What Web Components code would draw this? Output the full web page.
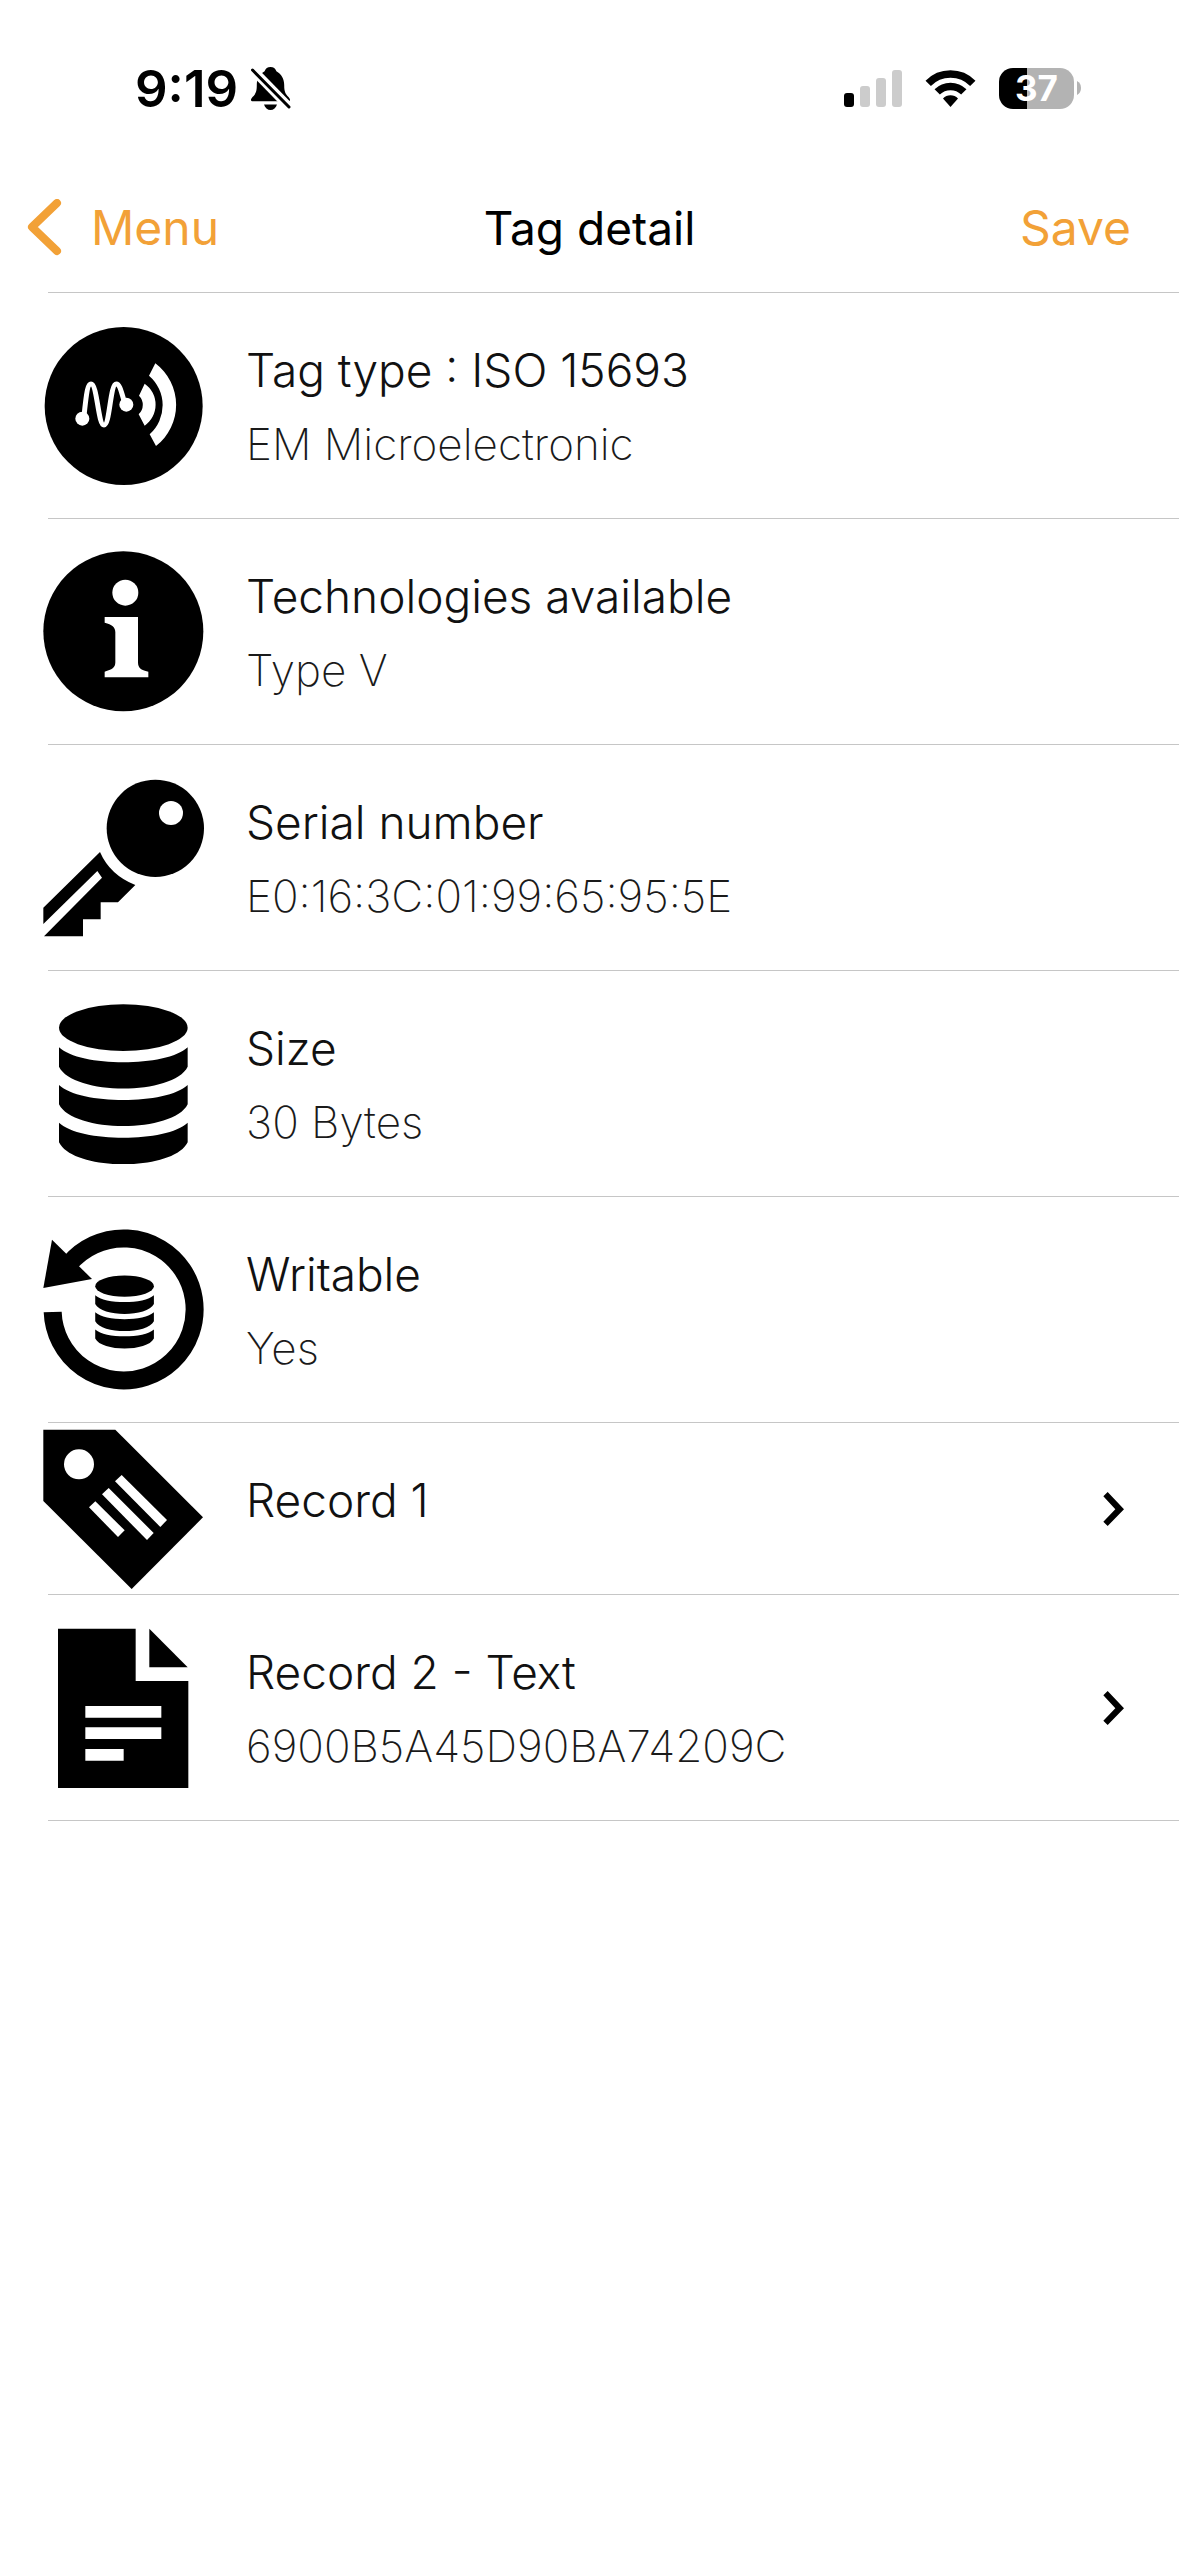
<!DOCTYPE html>
<html lang="en">
<head>
<meta charset="utf-8">
<meta name="viewport" content="width=device-width, initial-scale=1">
<title>Tag detail</title>
<style>
    :root {
        --accent: #f2a137;
        --line: #c6c6c6;
        --inset: 48px;
    }
    body {
        margin: 0;
        background: #fff;
        color: #000;
        font-family: Inter, "Liberation Sans", sans-serif;
    }
</style>
</head>
<body>
<status-bar time="9:19" battery="37"></status-bar>
<nav-bar>
    <a slot="back" href="#menu">Menu</a>
    Tag detail
    <button slot="action" type="button">Save</button>
</nav-bar>
<main>
    <tag-row icon="nfc">Tag type : ISO 15693<span slot="detail">EM Microelectronic</span></tag-row>
    <tag-row icon="info">Technologies available<span slot="detail">Type V</span></tag-row>
    <tag-row icon="key">Serial number<span slot="detail">E0:16:3C:01:99:65:95:5E</span></tag-row>
    <tag-row icon="size">Size<span slot="detail">30 Bytes</span></tag-row>
    <tag-row icon="writable">Writable<span slot="detail">Yes</span></tag-row>
    <tag-row icon="tag" href="#record-1" compact>Record 1</tag-row>
    <tag-row icon="doc" href="#record-2">Record 2 - Text<span slot="detail">6900B5A45D90BA74209C</span></tag-row>
</main>

<script>
const disks = `
    <ellipse cx="280" cy="113" rx="193" ry="70"/>
    <path d="M87 172C150 232 410 232 473 172V230C430 317 130 317 87 230Z"/>
    <path d="M87 285C150 345 410 345 473 285V343C430 430 130 430 87 343Z"/>
    <path d="M87 398C150 458 410 458 473 398V457C430 545 130 545 87 457Z"/>`;

const icons = {
    nfc: {
        viewBox: '39 45 483 483',
        shapes: `
            <circle cx="281" cy="288" r="237"/>
            <g fill="#fff">
                <circle cx="157" cy="326" r="21"/>
                <circle cx="289" cy="284" r="21"/>
                <path d="M344 221A77 77 0 0 1 344 347L326 313A39 39 0 0 0 327 257Z"/>
                <path d="M376 160A156 156 0 0 1 378 408L359 373A117 117 0 0 0 357 197Z"/>
            </g>
            <path d="M162 318C170 240 174 222 183 222C202 222 204 345 222 345C240 345 240 222 259 222C270 222 275 250 283 275" fill="none" stroke="#fff" stroke-width="15"/>`
    },
    info: {
        viewBox: '39 36 483 483',
        shapes: `
            <circle cx="280" cy="277" r="240"/>
            <circle cx="286" cy="161" r="39" fill="#fff"/>
            <path fill="#fff" d="M224 234H324V370C324 386 332 394 355 398V415H224V398C246 392 256 386 256 370V280C256 264 246 256 224 251Z"/>`
    },
    key: {
        viewBox: '39 36 483 483',
        shapes: `
            <circle cx="376" cy="190" r="146"/>
            <circle cx="423" cy="144" r="36" fill="#fff"/>
            <path d="M210 261Q240 330 316 360L264 412H212V463H159V514H42L216 338L202 318L40 477V428Z"/>`
    },
    size: { viewBox: '39 39 483 483', shapes: disks },
    writable: {
        viewBox: '39 42 483 483',
        shapes: `
            <path d="M68 291A213 213 0 1 0 118 146" fill="none" stroke="#000" stroke-width="54"/>
            <path d="M66 74L40 219L186 192Z"/>
            <g transform="translate(156 162) scale(.456)">${disks}</g>`
    },
    tag: {
        viewBox: '39 39 483 483',
        shapes: `
            <path d="M40 44H256L519 307L305 522L40 258Z"/>
            <g fill="#fff">
                <circle cx="147" cy="148" r="45"/>
                <path d="M275 180L411 315L391 336L255 199Z"/>
                <path d="M236 219L371 354L351 375L216 238Z"/>
                <path d="M196 259L284 346L264 366L177 277Z"/>
            </g>`
    },
    doc: {
        viewBox: '39 51 483 483',
        shapes: `
            <path d="M84 56H317V213H475V535H84Z"/>
            <path d="M358 56L473 172H358Z"/>
            <path fill="#fff" d="M166 288H394V323H166ZM166 352H394V387H166ZM166 417H281V452H166Z"/>`
    }
};

class StatusBar extends HTMLElement {
    constructor() {
        super();
        this.attachShadow({ mode: 'open' });
    }

    connectedCallback() {
        const battery = this.getAttribute('battery');
        this.shadowRoot.innerHTML = `
            <style>
                :host {
                    display: flex;
                    align-items: center;
                    justify-content: space-between;
                    box-sizing: border-box;
                    height: 164px;
                    padding: 12px 98px 0 135px;
                }
                .left, .right, .power {
                    display: flex;
                    align-items: center;
                }
                .left {
                    gap: 12px;
                }
                .right {
                    gap: 23px;
                }
                .power {
                    gap: 3px;
                }
                time {
                    font-size: 51px;
                    font-weight: 600;
                }
                svg {
                    display: block;
                }
                .battery {
                    width: 75px;
                    height: 41px;
                    border-radius: 14px;
                    background: linear-gradient(to right, #000 ${battery}%, #b3b3b3 ${battery}%);
                    color: #fff;
                    font-size: 35px;
                    font-weight: 700;
                    line-height: 41px;
                    text-align: center;
                }
            </style>
            <div class="left">
                <time>${this.getAttribute('time')}</time>
                <svg width="42" height="45" viewBox="0 0 42 45" role="img" aria-label="Silent">
                    <path d="M20.5 1C17.5 1 15.5 2.6 14.6 5.2C9.5 8 6.8 13 6.8 19C6.8 26 5.5 28 2.5 31C0 34 .8 35.2 3 35.2H38C40.2 35.2 41 34 38.5 31C35.5 28 34.2 26 34.2 19C34.2 13 31.5 8 26.4 5.2C25.5 2.6 23.5 1 20.5 1Z"/>
                    <path d="M14 38.5H27C26 42 23.5 44 20.5 44C17.5 44 15 42 14 38.5Z"/>
                    <path d="M-1 0L42 44" stroke="#fff" stroke-width="9"/>
                    <path d="M2.5 4L39 41" stroke="#000" stroke-width="3" stroke-linecap="round"/>
                </svg>
            </div>
            <div class="right">
                <svg width="58" height="37" viewBox="0 0 58 37" role="img" aria-label="Signal">
                    <rect y="23" width="10" height="14" rx="3"/>
                    <g fill="#ccc">
                        <rect x="16" y="16" width="10" height="21" rx="3"/>
                        <rect x="32" y="8" width="10" height="29" rx="3"/>
                        <rect x="48" width="10" height="37" rx="3"/>
                    </g>
                </svg>
                <svg width="51" height="37" viewBox="0 0 51 37" role="img" aria-label="Wi-Fi">
                    <g fill="none" stroke="#000" stroke-width="7.5">
                        <path d="M3.2 13.3A31.3 31.3 0 0 1 47.8 13.3"/>
                        <path d="M12.2 21.9A18.8 18.8 0 0 1 38.8 21.9"/>
                    </g>
                    <path d="M18 28.5A10.5 10.5 0 0 1 33 28.5L25.5 37Z"/>
                </svg>
                <div class="power">
                    <div class="battery">${battery}</div>
                    <svg width="4" height="14" viewBox="0 0 4 14"><path fill="#b3b3b3" d="M0 0Q4 2 4 7T0 14Z"/></svg>
                </div>
            </div>
        `;
    }
}

class NavBar extends HTMLElement {
    constructor() {
        super();
        this.attachShadow({ mode: 'open' });
        this.shadowRoot.innerHTML = `
            <style>
                :host {
                    display: block;
                }
                header {
                    display: grid;
                    grid-template-columns: 1fr auto 1fr;
                    align-items: center;
                    height: 128px;
                }
                h1 {
                    margin: 0;
                    font-size: 46px;
                    font-weight: 400;
                }
                .back {
                    display: flex;
                    align-items: center;
                    gap: 28px;
                    padding-left: 27px;
                }
                .action {
                    padding-right: 48px;
                    text-align: right;
                }
                svg {
                    display: block;
                }
                ::slotted(a), ::slotted(button) {
                    padding: 0;
                    border: 0;
                    background: none;
                    color: var(--accent);
                    font: 400 48px/60px Inter, "Liberation Sans", sans-serif;
                    text-decoration: none;
                    cursor: pointer;
                }
                .line {
                    height: 1px;
                    margin-left: var(--inset);
                    background: var(--line);
                }
            </style>
            <header>
                <div class="back">
                    <svg width="36" height="58" viewBox="0 0 36 58" fill="none" stroke="#f2a137" stroke-width="8" stroke-linecap="round" stroke-linejoin="round">
                        <path d="M30 4L5 28L30 52"/>
                    </svg>
                    <slot name="back"></slot>
                </div>
                <h1><slot></slot></h1>
                <div class="action"><slot name="action"></slot></div>
            </header>
            <div class="line"></div>
        `;
    }
}

class TagRow extends HTMLElement {
    constructor() {
        super();
        this.attachShadow({ mode: 'open' });
    }

    connectedCallback() {
        const icon = icons[this.getAttribute('icon')];
        const href = this.getAttribute('href');
        const box = href ? 'a' : 'div';
        const arrow = `
            <svg class="arrow" width="22" height="36" viewBox="129 94 66 108">
                <path d="M143 97L192 149L143 199L130 186L166 149L130 110Z"/>
            </svg>`;
        this.shadowRoot.innerHTML = `
            <style>
                :host {
                    display: block;
                }
                .row {
                    display: flex;
                    align-items: center;
                    min-height: 225px;
                    padding: 0 54px 0 43px;
                    color: inherit;
                    text-decoration: none;
                }
                :host([compact]) .row {
                    min-height: 171px;
                }
                svg {
                    display: block;
                    flex: none;
                }
                .text {
                    flex: 1;
                    padding-top: 2px;
                    margin-left: 42px;
                }
                .title, .detail {
                    line-height: 74px;
                }
                .title {
                    color: #111;
                    font-size: 46px;
                    font-weight: 300;
                }
                .detail {
                    min-height: 20px;
                    color: #1a1a1a;
                    font-size: 44px;
                    font-weight: 200;
                }
                .line {
                    height: 1px;
                    margin-left: var(--inset);
                    background: var(--line);
                }
            </style>
            <${box} class="row" ${href ? `href="${href}"` : ''}>
                <svg width="161" height="161" viewBox="${icon.viewBox}" aria-hidden="true">${icon.shapes}</svg>
                <div class="text">
                    <div class="title"><slot></slot></div>
                    <div class="detail"><slot name="detail"></slot></div>
                </div>
                ${href ? arrow : ''}
            </${box}>
            <div class="line"></div>
        `;
    }
}

customElements.define('status-bar', StatusBar);
customElements.define('nav-bar', NavBar);
customElements.define('tag-row', TagRow);
</script>
</body>
</html>
